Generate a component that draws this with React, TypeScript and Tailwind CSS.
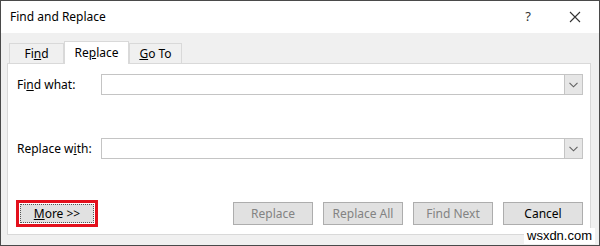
import React from 'react';

const font = { fontFamily: '"Noto Sans", "Open Sans", sans-serif' };

function Chevron() {
  return (
    <svg width="9" height="6" viewBox="0 0 9 6" fill="none">
      <path d="M0.5 0.8 L4.5 4.8 L8.5 0.8" stroke="#606060" strokeWidth="1.1" />
    </svg>
  );
}

function Combo() {
  return (
    <div className="flex h-[21px] flex-1 border border-[#c4c4c4] bg-white">
      <div className="flex-1" />
      <div className="flex w-[18px] items-center justify-center border-l border-[#c4c4c4] bg-[#e6e6e6]">
        <Chevron />
      </div>
    </div>
  );
}

function Btn({ children, disabled }: { children: React.ReactNode; disabled?: boolean }) {
  return (
    <button
      className={
        'flex h-[23px] w-[80px] items-center justify-center border border-[#adadad] bg-[#e1e1e1] text-[12px] ' +
        (disabled ? 'text-[#838383]' : 'text-black')
      }
    >
      {children}
    </button>
  );
}

export default function App() {
  return (
    <div style={font} className="relative h-[246px] w-[600px] overflow-hidden border border-[#4a4a4a] bg-[#f0f0f0] text-[12px] text-black">
      <div className="flex h-[32px] items-center justify-between bg-white pl-[9px] pr-[18px]">
        <span className="text-[12px]">Find and Replace</span>
        <div className="flex items-center gap-[38px]">
          <span className="text-[13px] text-[#333]">?</span>
          <svg width="12" height="12" viewBox="0 0 12 12">
            <path d="M1 1 L11 11 M11 1 L1 11" stroke="#333" strokeWidth="1.1" />
          </svg>
        </div>
      </div>

      <div className="pl-[6px] pr-[8px] pt-[8px]">
        <div className="flex h-[22px] items-end pl-[2px]">
          <div className="flex h-[20px] w-[55px] items-center justify-center border border-b-0 border-[#d9d9d9] bg-[#f0f0f0]">
            Fi<span className="underline">n</span>d
          </div>
          <div className="relative z-10 -mb-px flex h-[23px] w-[65px] items-center justify-center border border-b-0 border-[#d9d9d9] bg-white">
            Re<span className="underline">p</span>lace
          </div>
          <div className="flex h-[20px] w-[53px] items-center justify-center border border-b-0 border-[#d9d9d9] bg-[#f0f0f0]">
            <span className="underline">G</span>o To
          </div>
        </div>

        <div className="flex h-[172px] flex-col border border-[#d9d9d9] bg-white pl-[9px] pr-[7px] pt-[10px]">
          <div className="flex items-center">
            <span className="w-[84px]">
              Fi<span className="underline">n</span>d what:
            </span>
            <Combo />
          </div>
          <div className="mt-[43px] flex items-center">
            <span className="w-[84px]">
              Replace w<span className="underline">i</span>th:
            </span>
            <Combo />
          </div>
          <div className="mt-[41px] flex items-center">
            <div className="-ml-[1px] border-[3px] border-[#e3101c] p-px">
              <button className="flex h-[19px] w-[74px] items-center justify-center border border-dotted border-[#555] bg-[#e1e1e1]">
                <span>
                  <span className="underline">M</span>ore &gt;&gt;
                </span>
              </button>
            </div>
            <div className="ml-auto flex gap-[10px]">
              <Btn disabled>Replace</Btn>
              <Btn disabled>Replace All</Btn>
              <Btn disabled>Find Next</Btn>
              <Btn>Cancel</Btn>
            </div>
          </div>
        </div>
      </div>

      <div
        style={{ fontFamily: '"Liberation Sans", Arial, sans-serif' }}
        className="absolute left-[523px] top-[227px] bg-white px-[3px] text-[13px] leading-[16px] text-black"
      >
        wsxdn.com
      </div>
    </div>
  );
}
